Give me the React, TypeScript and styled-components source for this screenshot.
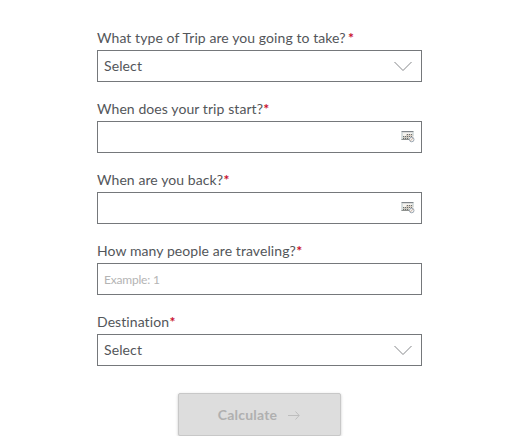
import React from "react";
import styled, { createGlobalStyle } from "styled-components";

const GlobalStyle = createGlobalStyle`
  * { box-sizing: border-box; }
  body { margin: 0; background: #fff; font-family: Lato, sans-serif; overflow: hidden; }
`;

const Form = styled.form`
  display: flex;
  flex-direction: column;
  width: 325px;
  margin-left: 97px;
  padding-top: 28px;
`;

const Field = styled.div`
  display: flex;
  flex-direction: column;
  height: 71px;
`;

const Label = styled.label`
  height: 22px;
  line-height: 20px;
  font-size: 14px;
  letter-spacing: 0.08px;
  font-variant-ligatures: none;
  color: #53565a;
  white-space: pre;
`;

const Required = styled.span<{ $gap?: boolean }>`
  margin-left: ${(p) => (p.$gap ? 2.5 : 0.3)}px;
  color: #c8102e;
  font-weight: 700;
`;

const Control = styled.div<{ $icon?: "chevron" | "calendar" }>`
  display: flex;
  align-items: center;
  justify-content: ${(p) => (p.$icon === "calendar" ? "flex-end" : "space-between")};
  height: 32px;
  padding: 0 ${(p) => (p.$icon === "calendar" ? 6 : 9)}px 0 6px;
  border: 1px solid #75787b;
`;

const Value = styled.span`
  padding-bottom: 2px;
  font-size: 14px;
  letter-spacing: 0.12px;
  color: #53565a;
`;

const Placeholder = styled.span`
  font-size: 12px;
  letter-spacing: -0.2px;
  color: #b4b4b4;
`;

const Button = styled.button`
  display: flex;
  align-items: center;
  justify-content: center;
  gap: 11px;
  align-self: flex-start;
  width: 163px;
  height: 43px;
  margin: 10px 0 0 81px;
  padding: 0 1px 0 0;
  border: 1px solid #c8c8c8;
  border-radius: 2px;
  background: #ddd;
  box-shadow: 0 1px 3px rgba(0, 0, 0, 0.22);
  font: 700 14px Lato, sans-serif;
  letter-spacing: 0.2px;
  color: #b0b0b0;
`;

const Chevron = () => (
  <svg width="18" height="11" viewBox="0 0 18 11" fill="none" stroke="#85878a">
    <path d="M.5 1 9 9.500 17.500 1" />
  </svg>
);

const Calendar = () => (
  <svg width="14" height="14" viewBox="0 0 14 14">
    <path d="M.5 1h12v9H.5z" fill="#f4f3ef" />
    <path d="M.5 1h12v1.200H.5z" fill="#80868b" />
    <path d="M.5 2.200h1v7.800h-1zM11.500 2.200h1v4h-1z" fill="#b9c9cc" />
    <path d="M.5 9h8v1h-8z" fill="#8e918e" />
    <path d="M5 4h6.500v3H5z" fill="#d9cfc4" />
    <path d="M2 6h3v3H2zM5 6h3v3H5z" fill="#cbc8bf" />
    <path d="M6 4h1v1H6zM8 4h1v1H8zM10 4h1v1h-1zM2 6h1v1H2zM4 6h1v1H4zM6 6h1v1H6zM8 6h1v1H8zM10 6h1v1h-1zM2 8h1v1H2zM4 8h1v1H4zM6 8h1v1H6z" fill="#686e70" />
    <circle cx="10.700" cy="9.500" r="2.300" fill="#f6f3f0" stroke="#929eaa" strokeWidth=".9" />
    <path d="m9.300 11 2.800-3" stroke="#bca596" strokeWidth=".8" />
  </svg>
);

const Arrow = () => (
  <svg width="12" height="10" viewBox="0 0 12 10" fill="none" stroke="#bdbdbd">
    <path d="M0 5.500h11M7.500 1.500l3.700 4-3.700 4" />
  </svg>
);

export default function App() {
  return (
    <>
      <GlobalStyle />
      <Form>
        <Field>
          <Label>What type of Trip are you going to take?<Required $gap>*</Required></Label>
          <Control $icon="chevron"><Value>Select</Value><Chevron /></Control>
        </Field>
        <Field>
          <Label>When does your trip start?<Required>*</Required></Label>
          <Control $icon="calendar"><Calendar /></Control>
        </Field>
        <Field>
          <Label>When are you back?<Required>*</Required></Label>
          <Control $icon="calendar"><Calendar /></Control>
        </Field>
        <Field>
          <Label>How many people are traveling?<Required>*</Required></Label>
          <Control><Placeholder>Example: 1</Placeholder></Control>
        </Field>
        <Field>
          <Label>Destination<Required>*</Required></Label>
          <Control $icon="chevron"><Value>Select</Value><Chevron /></Control>
        </Field>
        <Button type="button">Calculate<Arrow /></Button>
      </Form>
    </>
  );
}
